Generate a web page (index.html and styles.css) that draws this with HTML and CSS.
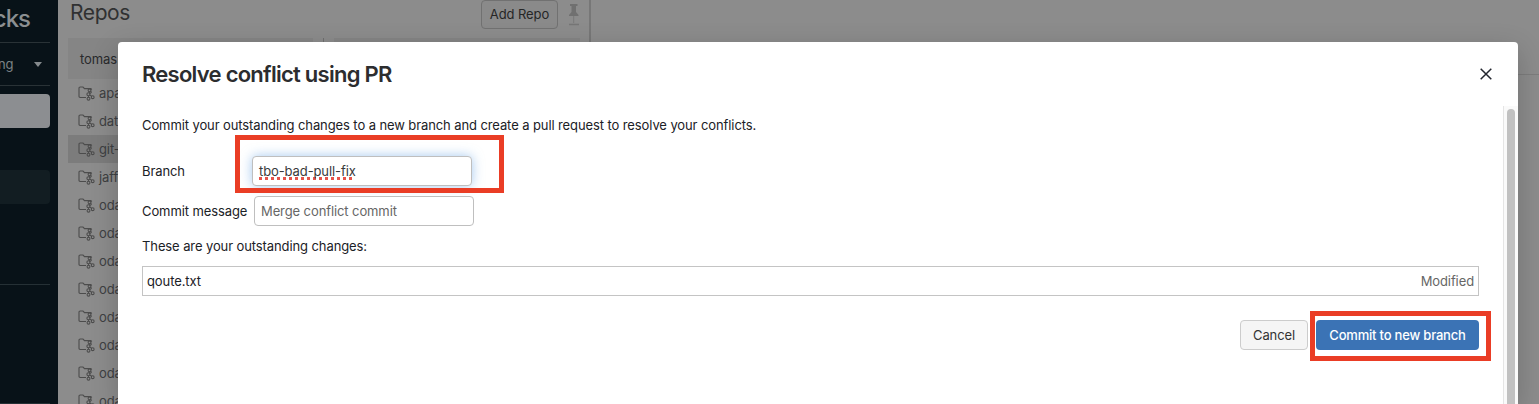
FILE: index.html
```html
<!DOCTYPE html>
<html lang="en">
<head>
<meta charset="utf-8">
<title>Repos</title>
<link rel="stylesheet" href="styles.css">
</head>
<body>
<svg class="defs" width="0" height="0">
  <symbol id="repo" viewBox="0 0 17 15">
    <path d="M8 11.5H2.2Q1 11.5 1 10.3V2.2Q1 1 2.2 1H5L6.5 2.6H12.6Q13.6 2.6 13.6 3.8" fill="none" stroke="currentColor" stroke-width="1.1"/>
    <g fill="none" stroke="currentColor" stroke-width="1.1"><circle cx="11.5" cy="4.3" r="1.4"/><circle cx="10.4" cy="8.2" r="1.5"/><circle cx="10.5" cy="12.7" r="1.4"/><circle cx="14.7" cy="11.2" r="1.4"/><path d="M11.6 5.7L11 6.9M10.5 9.7V11.3M11.7 8.9L13.6 10.2M12.8 4.8L13.2 6.6L11.9 7.6"/></g>
  </symbol>
</svg>
<div class="app">
  <nav class="sidebar">
    <div class="brand"><span>cks</span></div>
    <div class="workspace"><span>ng</span><i class="caret"></i></div>
    <div class="nav-item current"></div>
    <div class="nav-item hovered"></div>
    <div class="nav-section"></div>
  </nav>
  <section class="repos">
    <header class="repos-head">
      <h2>Repos</h2>
      <button class="add">Add Repo</button>
      <svg class="pin" width="12" height="22" viewBox="0 0 12 22"><path d="M2 0H9.5V2H8V8L10.5 11V12H1V11L3.5 8V2H2Z" fill="#707070"/><path d="M5.7 12V19" stroke="#797979"/><path d="M1 20.5H11" stroke="#767676" stroke-width="1.5"/></svg>
    </header>
    <div class="columns">
      <div class="column">
        <div class="column-head">tomas</div>
        <div class="row"><svg><use href="#repo"/></svg>apa</div>
        <div class="row"><svg><use href="#repo"/></svg>dat</div>
        <div class="row selected"><svg><use href="#repo"/></svg>git-</div>
        <div class="row"><svg><use href="#repo"/></svg>jaff</div>
        <div class="row"><svg><use href="#repo"/></svg>oda</div>
        <div class="row"><svg><use href="#repo"/></svg>oda</div>
        <div class="row"><svg><use href="#repo"/></svg>oda</div>
        <div class="row"><svg><use href="#repo"/></svg>oda</div>
        <div class="row"><svg><use href="#repo"/></svg>oda</div>
        <div class="row"><svg><use href="#repo"/></svg>oda</div>
        <div class="row"><svg><use href="#repo"/></svg>oda</div>
        <div class="row"><svg><use href="#repo"/></svg>oda</div>
      </div>
      <div class="column second"><div class="column-head"></div></div>
    </div>
  </section>
  <main class="content"></main>
</div>

<div class="modal">
  <header class="modal-head">
    <h1>Resolve conflict using PR</h1>
    <svg class="close" width="12" height="12" viewBox="0 0 12 12"><path d="M.7 .7L11.3 11.3M11.3 .7L.7 11.3" stroke="#22252e" stroke-width="1.5"/></svg>
  </header>
  <div class="modal-body">
    <div class="form">
      <p class="intro">Commit your outstanding changes to a new branch and create a pull request to resolve your conflicts.</p>
      <div class="field branch">
        <label>Branch</label>
        <div class="input focused"><span class="misspelled">tbo-bad-pull-fix</span></div>
        <div class="highlight highlight-branch"></div>
      </div>
      <div class="field"><label>Commit message</label><div class="input placeholder">Merge conflict commit</div></div>
      <p class="changes-label">These are your outstanding changes:</p>
      <div class="change"><span>qoute.txt</span><span class="status">Modified</span></div>
      <div class="actions">
        <button class="cancel">Cancel</button>
        <div class="primary-wrap"><button class="primary">Commit to new branch</button><div class="highlight highlight-commit"></div></div>
      </div>
    </div>
    <div class="scrollbar"><div class="thumb"></div></div>
  </div>
</div>
</body>
</html>
```
FILE: styles.css
```css
* { box-sizing: border-box; }
body { margin: 0; height: 404px; overflow: hidden; font: 13px/20px Inter, "Liberation Sans", sans-serif; letter-spacing: -.1px; color: #1b2126; position: relative; }
h1, h2, p { margin: 0; }
button { font: inherit; letter-spacing: inherit; padding: 0; border-radius: 4px; white-space: nowrap; }
.defs { position: absolute; }

.app { display: flex; height: 404px; background: #8c8c8c; overflow: hidden; }
.sidebar { width: 58px; padding-right: 8px; background: #081218; color: #8b8f91; flex: none; overflow: hidden; }
.brand { height: 43px; border-bottom: 1px solid #293236; display: flex; justify-content: flex-end; padding: 7px 20px 0 0; font-size: 24px; line-height: 24px; font-weight: 500; letter-spacing: -1px; overflow: hidden; }
.workspace { height: 43px; border-bottom: 1px solid #293236; display: flex; align-items: center; justify-content: space-between; padding: 0 8px 0 0; color: #7d8386; }
.workspace span { margin-left: -2px; }
.caret { border: 4px solid transparent; border-top: 5px solid #858a8d; border-bottom: 0; }
.nav-item { height: 34px; border-radius: 0 4px 4px 0; }
.current { margin-top: 8px; background: #8c8e91; }
.hovered { margin-top: 42px; background: #121d22; }
.nav-section { margin-top: 80px; height: 120px; border: solid #253035; border-width: 1px 0; }

.repos { width: 533px; height: 404px; border-right: 2px solid #777; flex: none; color: #353739; }
.repos-head { height: 38px; display: flex; align-items: flex-start; padding: 0 9px 0 12px; }
.repos-head h2 { font-size: 21px; line-height: 26px; font-weight: 400; letter-spacing: -.4px; margin-right: auto; color: #303132; }
.add { width: 77px; height: 29px; border: 1px solid #717171; background: #8a8a8a; color: #262626; padding-bottom: 1px; }
.pin { margin: 4px 0 0 10px; }
.columns { display: flex; height: 366px; overflow: hidden; padding-left: 10px; }
.column { width: 256px; padding-right: 10px; border-right: 1px solid #707070; }
.column.second { padding: 0 0 0 10px; border: 0; }
.column-head { height: 41px; background: #858585; padding: 11px 12px; color: #292a2c; }
.row { height: 28px; display: flex; align-items: center; gap: 4px; padding-left: 10px; color: #3e4042; }
.row svg { width: 17px; height: 15px; color: #4c4c4c; }
.selected { background: #7c7c7c; }
.content { flex: 1; margin-top: 74px; border-top: 1px solid #7d7d7d; }

.modal { position: absolute; left: 118px; top: 42px; width: 1400px; height: 362px; background: #fff; border-radius: 4px 4px 0 0; box-shadow: 0 8px 28px rgba(0,0,0,.2); display: flex; flex-direction: column; }
.modal-head { height: 64px; flex: none; display: flex; justify-content: space-between; align-items: center; padding: 0 26px 0 24px; }
.modal-head h1 { font-size: 22px; line-height: 28px; font-weight: 600; letter-spacing: -.74px; color: #2c2d2f; }
.modal-body { flex: 1; display: flex; }
.form { flex: 1; padding: 9px 24px 0; }
.field { display: flex; align-items: center; height: 30px; position: relative; }
.field label { width: 112px; }
.branch { margin: 21px 0 10px; }
.input { width: 220px; height: 30px; border: 1px solid #bfbfbf; border-radius: 4px; background: #fff; padding: 4px 6px; color: #3a3b3c; }
.focused { margin-left: -2px; box-shadow: 0 0 12px rgba(91,157,226,.55); }
.misspelled { text-decoration: underline dotted #e5534b 3px; text-underline-offset: 1px; text-decoration-skip-ink: none; }
.placeholder { color: #666; }
.highlight { position: absolute; border: 5px solid #ea3d25; pointer-events: none; }
.highlight-branch { left: 93px; top: -21px; width: 269px; height: 58px; }
.changes-label { margin: 10px 0; }
.change { height: 30px; border: 1px solid #c4c4c4; display: flex; justify-content: space-between; padding: 4px; }
.status { color: #666; }
.actions { display: flex; justify-content: flex-end; gap: 8px; margin-top: 24px; }
.cancel { width: 68px; height: 30px; background: #f5f5f5; border: 1px solid #ccc; color: #333; }
.primary-wrap { position: relative; }
.primary { display: block; width: 163px; height: 30px; border: 0; background: #3b73b5; color: #fff; font-weight: 500; letter-spacing: -.2px; }
.highlight-commit { left: -6px; top: -9px; width: 181px; height: 50px; }
.scrollbar { width: 15px; background: #fafafa; border-left: 1px solid #e5e5e5; padding: 3px 3px 0; display: flex; }
.thumb { width: 8px; border-radius: 4px 4px 0 0; background: #c1c1c1; }
```
